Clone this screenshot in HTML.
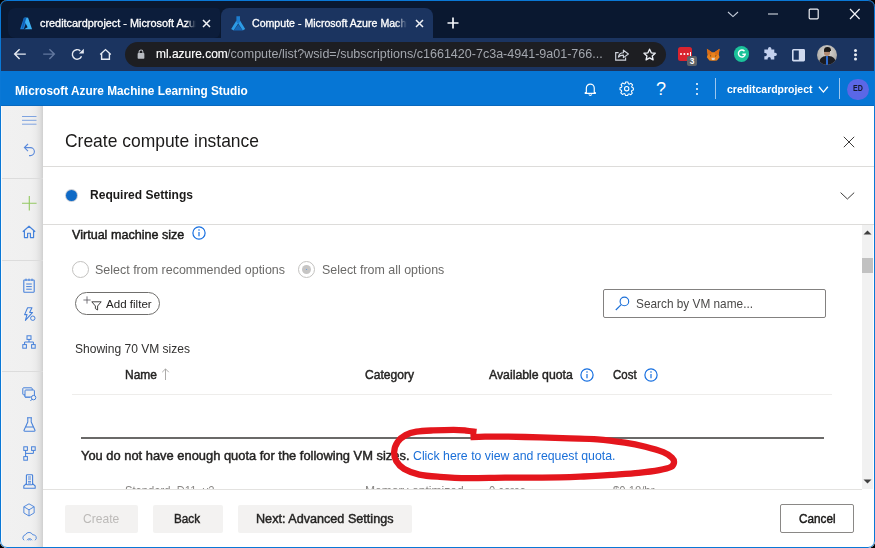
<!DOCTYPE html>
<html lang="en">
<head>
<meta charset="utf-8">
<title>Compute - Microsoft Azure Machine Learning Studio</title>
<style>
*{box-sizing:border-box;margin:0;padding:0}
html,body{width:875px;height:548px;overflow:hidden;background:#000}
body{font-family:"Liberation Sans",sans-serif;color:#201f1e;position:relative}
.t{position:absolute;white-space:nowrap;line-height:1;transform-origin:0 50%}
svg{position:absolute;overflow:visible}
#win{position:absolute;left:0;top:0;width:875px;height:548px;background:#fff;border-radius:7px;overflow:hidden}
#frame{position:absolute;left:0;top:0;width:875px;height:548px;border:1px solid #0a78d6;border-radius:7px;pointer-events:none}
/* chrome */
#tabbar{position:absolute;left:0;top:0;width:875px;height:38px;background:#0a1830}
#tab1{position:absolute;left:8px;top:8px;width:212px;height:30px;background:#0c1d3b;border-radius:7px 4px 6px 7px}
#tab2{position:absolute;left:221px;top:8px;width:212px;height:30px;background:#1b3460;border-radius:8px 8px 0 0}
#toolbar{position:absolute;left:0;top:38px;width:875px;height:33px;background:#1b3460}
#pill{position:absolute;left:125px;top:42px;width:541px;height:25px;border-radius:13px;background:#1d1e22}
/* azure header */
#azhead{position:absolute;left:0;top:71px;width:875px;height:35px;background:#0676d5}
#azhead .t{color:#fff}
/* sidebar */
#side{position:absolute;left:0;top:106px;width:43px;height:442px;background:linear-gradient(90deg,#fafafa 0,#fafafa 2px,#f1f1f1 2.5px,#f0f0f0 31px,#ebebeb 36px,#e0e0e0 40px,#d0d0d0 43px)}
.sep{position:absolute;left:2px;width:41px;height:1px;background:#dcdcdc}
/* panel */
#panel{position:absolute;left:43px;top:106px;width:832px;height:442px;background:#fff}
.hl{position:absolute;height:1px;background:#dddcda}
.btn{position:absolute;top:505px;height:28px;background:#f3f2f1;border-radius:2px}
.gray{color:#6b6a68}
#c1s,#c2s{display:inline-block;transform-origin:0 50%}
.sb{font-weight:normal !important;-webkit-text-stroke:0.45px currentColor}
#c1s{transform:scaleX(1.0452)}
#c2s{transform:scaleX(1.0198)}
#url1{transform:scaleX(0.9765)}
#url2{transform:scaleX(1.0226)}
#aztitle{transform:scaleX(0.8889)}
#azws{transform:scaleX(0.9264)}
#ptitle{transform:scaleX(0.9489)}
#preq{transform:scaleX(0.9488)}
#pvm{transform:scaleX(0.9911)}
#pr1{transform:scaleX(0.9833)}
#pr2{transform:scaleX(0.9797)}
#paf{transform:scaleX(1.0068)}
#psearch{transform:scaleX(0.9320)}
#pshow{transform:scaleX(0.9481)}
#hname{transform:scaleX(0.9455)}
#hcat{transform:scaleX(0.9517)}
#hquota{transform:scaleX(0.9683)}
#hcost{transform:scaleX(0.9044)}
#pquota{transform:scaleX(1.0161)}
#plink{transform:scaleX(0.9700)}
#bcreate{transform:scaleX(0.9503)}
#bback{transform:scaleX(0.9214)}
#bnext{transform:scaleX(0.9946)}
#bcancel{transform:scaleX(0.9266)}
#r1a{transform:scaleX(0.8841)}
#r1b{transform:scaleX(0.9522)}
#r1c{transform:scaleX(0.8796)}
#r1d{transform:scaleX(0.8891)}
#azed{transform:scaleX(0.8703)}
#c1{top:15.80px !important}
#c2{top:15.80px !important}
#url1{top:46.06px !important}
#url2{top:46.06px !important}
#aztitle{top:81.69px !important}
#azws{top:80.68px !important}
#azed{top:84.36px !important}
#ptitle{top:128.52px !important}
#preq{top:187.20px !important}
#pvm{top:226.50px !important}
#pr1{top:261.80px !important}
#pr2{top:261.80px !important}
#paf{top:296.92px !important}
#psearch{top:296.00px !important}
#pshow{top:340.50px !important}
#hname{top:367.00px !important}
#hcat{top:367.00px !important}
#hquota{top:367.00px !important}
#hcost{top:367.00px !important}
#pquota{top:447.70px !important}
#plink{top:447.70px !important}
#bcreate{top:511.10px !important}
#bback{top:511.10px !important}
#bnext{top:511.10px !important}
#bcancel{top:511.10px !important}
</style>
</head>
<body>
<div id="win">
<!-- ===== Browser chrome ===== -->
<div id="tabbar"></div>
<div id="tab1"></div>
<div id="tab2"></div>
<div id="toolbar"></div>
<div id="pill"></div>

<!-- tab 1 favicon (Azure A) -->
<svg style="left:18.6px;top:16.8px" width="14" height="13.6" viewBox="0 0 15 15">
  <path d="M5.2 0.8 L9.6 0.8 L5 13.6 L1 13.6 Z" fill="#1a7fd8"/>
  <path d="M6.2 0.8 L9.8 0.8 L14.2 13.6 L5.4 13.6 L9.3 11.2 L6.6 6.2 Z" fill="#3db1f2"/>
  <path d="M5.2 0.8 L8 0.8 L4.2 12 L3 12.6 Z" fill="#0f5fb4"/>
</svg>
<div class="t" id="c1" style="left:40px;top:16px;font-size:10.4px;-webkit-text-stroke:0.3px #fff;color:#fff;width:160px;overflow:hidden;-webkit-mask-image:linear-gradient(90deg,#000 146px,transparent 156px);mask-image:linear-gradient(90deg,#000 146px,transparent 156px);line-height:15px"><span id="c1s" >creditcardproject - Microsoft Azure Machine</span></div>
<svg style="left:202px;top:19px" width="9" height="9" viewBox="0 0 9 9"><path d="M1 1L8 8M8 1L1 8" stroke="#f0f2f6" stroke-width="1.5" fill="none"/></svg>

<!-- tab 2 favicon (Azure ML) -->
<svg style="left:231.2px;top:16px" width="14.4" height="15" viewBox="0 0 14.4 15">
  <path d="M7.2 8.6L11.6 14.6H2.8Z" fill="#1766b5"/>
  <path d="M5.4 4.6L7.2 7.6L2.6 14.6L0.2 13Z" fill="#2c9be6"/>
  <path d="M9 4.6L7.2 7.6L11.8 14.6L14.2 13Z" fill="#2c9be6"/>
  <path d="M5.4 0.2H9V5.4L7.2 8L5.4 5.4Z" fill="#1e7ed0"/>
</svg>
<div class="t" id="c2" style="left:252px;top:16px;font-size:10.4px;-webkit-text-stroke:0.3px #fff;color:#fff;width:158px;overflow:hidden;-webkit-mask-image:linear-gradient(90deg,#000 144px,transparent 155px);mask-image:linear-gradient(90deg,#000 144px,transparent 155px);line-height:15px"><span id="c2s" >Compute - Microsoft Azure Machine Learning</span></div>
<svg style="left:415px;top:19px" width="9" height="9" viewBox="0 0 9 9"><path d="M1 1L8 8M8 1L1 8" stroke="#f0f2f6" stroke-width="1.5" fill="none"/></svg>
<!-- new tab plus -->
<svg style="left:447px;top:17px" width="12" height="12" viewBox="0 0 12 12"><path d="M6 0.5V11.5M0.5 6H11.5" stroke="#f4f6fa" stroke-width="1.7" fill="none"/></svg>

<!-- window controls -->
<svg style="left:727px;top:11px" width="12" height="7" viewBox="0 0 12 7"><path d="M1 1L6 5.6L11 1" stroke="#c7cedb" stroke-width="1.1" fill="none"/></svg>
<svg style="left:767px;top:13px" width="12" height="2" viewBox="0 0 12 2"><path d="M1 1H11" stroke="#e6e9ef" stroke-width="1.2"/></svg>
<svg style="left:808px;top:8px" width="12" height="12" viewBox="0 0 12 12"><rect x="1.2" y="1.2" width="9" height="9.6" rx="1" stroke="#eef0f5" stroke-width="1.2" fill="none"/></svg>
<svg style="left:849px;top:8px" width="12" height="12" viewBox="0 0 12 12"><path d="M1 1L10.6 11M10.6 1L1 11" stroke="#f2f4f8" stroke-width="1.2" fill="none"/></svg>

<!-- toolbar nav icons -->
<svg style="left:0;top:0" width="125" height="71" viewBox="0 0 125 71">
<path d="M25.8 54.1H15.2M19.6 49.2L14.7 54.1L19.6 59" stroke="#e6eaf2" stroke-width="1.45" fill="none"/>
<path d="M43.2 54.1H53.8M49.4 49.2L54.3 54.1L49.4 59" stroke="#62779e" stroke-width="1.45" fill="none"/>
<path d="M80.28 50.87A4.75 4.75 0 1 0 81.50 56.18" stroke="#e6eaf2" stroke-width="1.45" fill="none"/>
<path d="M83.8 48.7V53.6H78.9Z" fill="#e6eaf2"/>
<path d="M100.2 54.6L105.5 49.6L110.8 54.6M101.6 53.6V59.3H109.4V53.6" stroke="#e6eaf2" stroke-width="1.4" fill="none"/>
</svg>
<!-- lock -->
<svg style="left:137px;top:48.6px" width="8" height="10.6" viewBox="0 0 10 13"><rect x="0.8" y="5" width="8.4" height="7.2" rx="1" fill="#b9bcc2"/><path d="M2.6 5.4V3.6A2.4 2.4 0 0 1 7.4 3.6V5.4" stroke="#b9bcc2" stroke-width="1.3" fill="none"/></svg>
<div class="t" id="url1" style="left:155.5px;top:46px;font-size:12.25px;-webkit-text-stroke:0.15px #fff;line-height:17px;color:#fff">ml.azure.com</div>
<div class="t" id="url2" style="left:227.3px;top:46px;font-size:12.25px;line-height:17px;color:#a3a7ae">/compute/list?wsid=/subscriptions/c1661420-7c3a-4941-9a01-766...</div>
<!-- share -->
<svg style="left:614.5px;top:48.4px" width="14.5" height="12.8" viewBox="0 0 14.5 12.8"><path d="M3.6 4.6H0.7V12.1H10.6V9.4" stroke="#cfd4dc" stroke-width="1.15" fill="none"/><path d="M3.4 9.2C3.8 6.4 5.6 4.9 8.4 4.8V2.2L13.4 6L8.4 9.6V7.2C6.2 7.2 4.6 7.8 3.4 9.2Z" stroke="#cfd4dc" stroke-width="1.15" fill="none" stroke-linejoin="round"/></svg>
<!-- star -->
<svg style="left:643.2px;top:47.8px" width="13.2" height="13.2" viewBox="0 0 15 15"><path d="M7.5 1.4L9.4 5.5L13.9 6L10.5 9L11.5 13.5L7.5 11.2L3.5 13.5L4.5 9L1.1 6L5.6 5.5Z" stroke="#eef1f6" stroke-width="1.55" fill="none" stroke-linejoin="round"/></svg>

<!-- extensions -->
<!-- lastpass-like red -->
<div style="position:absolute;left:678px;top:47px;width:14px;height:14.4px;border-radius:2.5px;background:#d9242f"></div>
<div style="position:absolute;left:680px;top:53.4px;width:2px;height:2px;border-radius:1px;background:#fff;box-shadow:3.4px 0 0 #fff,6.8px 0 0 #fff"></div>
<div style="position:absolute;left:690.2px;top:51.6px;width:1px;height:5.6px;background:#fff"></div>
<div style="position:absolute;left:687.2px;top:56px;width:9.8px;height:9.8px;border-radius:2px;background:#5f6469"></div>
<div class="t" style="left:689.8px;top:57.2px;font-size:8.4px;font-weight:bold;color:#fff;line-height:8px">3</div>
<!-- metamask fox -->
<svg style="left:706.2px;top:47.8px" width="14.4" height="13.6" viewBox="0 0 17 16">
  <path d="M1 0.8L7 5H10L16 0.8L15 7.6L16 11L13 14.6L10 15H7L4 14.6L1 11L2 7.6Z" fill="#e8821e"/>
  <path d="M1 0.8L7 5L6 8L2 7.6ZM16 0.8L10 5L11 8L15 7.6Z" fill="#d96c16"/>
  <path d="M6.4 11.6H10.6L10 14H7Z" fill="#dcd3c8"/>
  <path d="M4.4 8.6L6.2 9L5.8 10.2ZM12.6 8.6L10.8 9L11.2 10.2Z" fill="#2a2320"/>
</svg>
<!-- grammarly -->
<div style="position:absolute;left:734.2px;top:46.4px;width:15.2px;height:15.2px;border-radius:8px;background:#1bc29a"></div>
<svg style="left:737px;top:49.2px" width="9.6" height="9.6" viewBox="0 0 10 10"><path d="M7.8 2.4A3.6 3.6 0 1 0 8.6 5.4H5.6" stroke="#fff" stroke-width="1.5" fill="none"/></svg>
<!-- puzzle -->
<svg style="left:762px;top:46.4px" width="16" height="15.6" viewBox="0 0 16 16"><path d="M6 2.6A1.7 1.7 0 0 1 9.4 2.6V3.6H12.4V6.8H13.4A1.7 1.7 0 0 1 13.4 10.2H12.4V13.8H8.8V12.8A1.6 1.6 0 0 0 5.6 12.8V13.8H2.2V10.4H3.2A1.6 1.6 0 0 0 3.2 7.2H2.2V3.6H6Z" fill="#c3d0ee"/></svg>
<!-- side panel -->
<svg style="left:792.2px;top:48.6px" width="13" height="12.4" viewBox="0 0 13 12.4"><rect x="0.8" y="0.8" width="11.4" height="10.8" rx="0.6" stroke="#d0daf0" stroke-width="1.6" fill="none"/><rect x="6.8" y="0.8" width="5.4" height="10.8" fill="#d0daf0"/></svg>
<!-- avatar -->
<div style="position:absolute;left:817.2px;top:45px;width:20px;height:20px;border-radius:10px;background:radial-gradient(circle at 50% 40%,#dcd9d5 0,#bcb9b5 50%,#8f8d8b 100%);overflow:hidden">
  <div style="position:absolute;left:6.8px;top:3.4px;width:6.4px;height:8px;border-radius:3.2px;background:#b08a72"></div>
  <div style="position:absolute;left:6.6px;top:2.4px;width:6.8px;height:3.6px;border-radius:3.4px 3.4px 0 0;background:#1d1a18"></div>
  <div style="position:absolute;left:7px;top:6.2px;width:6px;height:1.2px;background:#2a2522"></div>
  <div style="position:absolute;left:1.5px;top:11.4px;width:17px;height:12px;border-radius:7px 7px 0 0;background:#1b1c22"></div>
  <div style="position:absolute;left:9.2px;top:11.4px;width:1.8px;height:9px;background:#2c6ad0"></div>
</div>
<!-- dots -->
<div style="position:absolute;left:854.3px;top:49.1px;width:2.6px;height:2.6px;border-radius:2px;background:#e8ecf3;box-shadow:0 4.3px 0 #e8ecf3,0 8.6px 0 #e8ecf3"></div>
<!-- ===== Azure header ===== -->
<div id="azhead"></div>
<div id="hdrshadow" style="position:absolute;left:0;top:105px;width:875px;height:1px;background:#0868be"></div>
<div class="t" id="aztitle" style="left:15px;top:81px;font-size:13.3px;font-weight:bold;color:#fff;line-height:17px">Microsoft Azure Machine Learning Studio</div>
<!-- bell -->
<svg style="left:583.7px;top:81.6px" width="12.6" height="15" viewBox="0 0 14 16"><path d="M2.6 11.4V6.4A4.4 4.4 0 0 1 11.4 6.4V11.4H12.6V12.4H1.4V11.4Z" stroke="#fff" stroke-width="1.3" fill="none" stroke-linejoin="round"/><path d="M5.4 13.4A1.7 1.7 0 0 0 8.6 13.4" stroke="#fff" stroke-width="1.2" fill="none"/></svg>
<!-- gear -->
<svg style="left:618.9px;top:81.4px" width="15.4" height="15.4" viewBox="-8.5 -8.5 17 17"><g stroke="#fff" fill="none"><circle r="2.4" stroke-width="1.2"/><path stroke-width="1.15" stroke-linejoin="round" d="M-1.3 -7.4H1.3L1.8 -5.5L3 -5L4.7 -6L6.5 -4.2L5.5 -2.5L6 -1.3L7.4 -0.9V1.5L5.7 2L5.2 3.2L6.2 4.9L4.4 6.7L2.7 5.7L1.5 6.2L1.1 7.6H-1.3L-1.8 5.9L-3 5.4L-4.7 6.4L-6.5 4.6L-5.5 2.9L-6 1.7L-7.4 1.3V-1.1L-5.7 -1.6L-5.2 -2.8L-6.2 -4.5L-4.4 -6.3L-2.7 -5.3L-1.6 -5.7Z"/></g></svg>
<!-- question -->
<div class="t" id="azq" style="left:656px;top:80px;font-size:18px;color:#fff;line-height:18px">?</div>
<!-- dots -->
<div style="position:absolute;left:696px;top:83px;width:2px;height:2px;border-radius:1px;background:#fff;box-shadow:0 5px 0 #fff,0 10px 0 #fff"></div>
<div style="position:absolute;left:715px;top:78px;width:1px;height:21px;background:#9cc6ee"></div>
<div class="t" id="azws" style="left:727px;top:81px;font-size:11.3px;font-weight:bold;color:#fff;line-height:16px">creditcardproject</div>
<svg style="left:818px;top:86.4px" width="11" height="7.4" viewBox="0 0 11 8"><path d="M0.6 0.8L5.4 6.6L10.2 0.8" stroke="#fff" stroke-width="1.4" fill="none"/></svg>
<div style="position:absolute;left:839px;top:78px;width:1px;height:21px;background:#9cc6ee"></div>
<div style="position:absolute;left:847px;top:78.5px;width:21.5px;height:21.5px;border-radius:11px;background:#5b67e6"></div>
<div class="t" id="azed" style="left:853px;top:84px;font-size:8.2px;font-weight:bold;color:#15182e;line-height:10px">ED</div>
<!-- ===== Sidebar ===== -->
<div id="side"></div>
<div class="sep" style="top:178px"></div>
<div class="sep" style="top:260px"></div>
<div class="sep" style="top:371px"></div>
<!-- hamburger -->
<svg style="left:22px;top:115px" width="14.5" height="11" viewBox="0 0 14.5 11"><path d="M0 1.5H14.5M0 5.3H14.5M0 9.2H14.5" stroke="#7ea3e0" stroke-width="1"/></svg>
<!-- undo -->
<svg style="left:23px;top:143px" width="13" height="14" viewBox="0 0 13 14"><path d="M5 1L1.4 4.6L5 8.2M1.6 4.6H7.4A4 4 0 0 1 7.4 12.6H6" stroke="#5b8adb" stroke-width="1.1" fill="none"/></svg>
<!-- plus -->
<svg style="left:21.9px;top:196.2px" width="14.6" height="14.6" viewBox="0 0 15 15"><path d="M7.5 0V15M0 7.5H15" stroke="#93c862" stroke-width="1.15"/></svg>
<!-- home -->
<svg style="left:22.2px;top:225.2px" width="14" height="14" viewBox="0 0 14 14"><path d="M0.8 6.8L7 1.2L13.2 6.8M2.4 5.8V12.6H5.6V8.2H8.4V12.6H11.6V5.8" stroke="#4482dc" stroke-width="1.15" fill="none" stroke-linejoin="round"/></svg>
<!-- notebook -->
<svg style="left:23px;top:278px" width="12" height="15" viewBox="0 0 12 15"><rect x="0.8" y="2" width="10.4" height="12.2" rx="0.6" stroke="#4580da" stroke-width="1.1" fill="none"/><path d="M3 0.6V3M6 0.6V3M9 0.6V3M3.2 6H8.8M3.2 8.6H8.8M3.2 11.2H8.8" stroke="#4580da" stroke-width="1"/></svg>
<!-- lightning (automated ml) -->
<svg style="left:23px;top:307px" width="13" height="15" viewBox="0 0 13 15"><path d="M4.6 0.8H9L6.6 5.4H9.6L2.4 13.4L4 7.6H1.6Z" stroke="#4580da" stroke-width="1.05" fill="none" stroke-linejoin="round"/><circle cx="9.8" cy="11.2" r="2.2" stroke="#4580da" stroke-width="1" fill="#efefef"/></svg>
<!-- org chart (designer) -->
<svg style="left:22px;top:335px" width="14" height="14" viewBox="0 0 14 14"><rect x="5" y="0.8" width="4" height="3.6" stroke="#4580da" stroke-width="1" fill="none"/><rect x="0.8" y="9.6" width="3.6" height="3.6" stroke="#4580da" stroke-width="1" fill="none"/><rect x="9.6" y="9.6" width="3.6" height="3.6" stroke="#4580da" stroke-width="1" fill="none"/><path d="M7 4.4V7M2.6 9.6V7H11.4V9.6" stroke="#4580da" stroke-width="1" fill="none"/></svg>
<!-- datasets -->
<svg style="left:22px;top:387px" width="15" height="15" viewBox="0 0 15 15"><rect x="0.8" y="0.8" width="9.4" height="7" rx="0.8" stroke="#4580da" stroke-width="1" fill="none"/><path d="M3 7.8V10.2H8" stroke="#4580da" stroke-width="1" fill="none"/><rect x="3" y="3" width="9.4" height="7" rx="0.8" stroke="#4580da" stroke-width="1" fill="#efefef"/><circle cx="11.6" cy="10.6" r="2.2" stroke="#4580da" stroke-width="1" fill="#efefef"/><path d="M10 12.2L8.4 14" stroke="#4580da" stroke-width="1"/></svg>
<!-- flask -->
<svg style="left:23px;top:417px" width="13" height="15" viewBox="0 0 13 15"><path d="M4 0.8H9M4.8 0.8V5L1 13.2Q0.8 14.2 1.8 14.2H11.2Q12.2 14.2 12 13.2L8.2 5V0.8M2.8 10H10.2" stroke="#4580da" stroke-width="1.05" fill="none" stroke-linejoin="round"/></svg>
<!-- pipeline -->
<svg style="left:23px;top:446px" width="13" height="15" viewBox="0 0 13 15"><rect x="0.8" y="0.8" width="3.6" height="3.6" stroke="#4580da" stroke-width="1" fill="none"/><rect x="8.6" y="0.8" width="3.6" height="3.6" stroke="#4580da" stroke-width="1" fill="none"/><rect x="0.8" y="10.6" width="3.6" height="3.6" stroke="#4580da" stroke-width="1" fill="none"/><path d="M2.6 4.4V10.6M10.4 4.4V7.4H2.6" stroke="#4580da" stroke-width="1" fill="none"/></svg>
<!-- server (models) -->
<svg style="left:23px;top:474px" width="13" height="15" viewBox="0 0 13 15"><rect x="3.4" y="0.8" width="6.2" height="10" rx="0.8" stroke="#4580da" stroke-width="1.1" fill="none"/><path d="M5 3H8M5 5H8M5 7.4H8M5 9H8" stroke="#4580da" stroke-width="0.9"/><path d="M3.4 9.6L0.8 12V14.2H12.2V12L9.6 9.6" stroke="#4580da" stroke-width="1.05" fill="none" stroke-linejoin="round"/></svg>
<!-- cube (endpoints) -->
<svg style="left:22.7px;top:503.4px" width="12" height="14" viewBox="0 0 14 16"><path d="M7 0.8L13 4.2V11.4L7 15L1 11.4V4.2ZM1 4.2L7 7.8L13 4.2M7 7.8V15" stroke="#4580da" stroke-width="1.05" fill="none" stroke-linejoin="round"/></svg>
<!-- cloud -->
<svg style="left:21.6px;top:532px" width="15" height="8.6" viewBox="0 0 17 10"><path d="M2.2 9.6A3.6 3.6 0 0 1 3.8 3.2A4.6 4.6 0 0 1 12.2 3.2A3.6 3.6 0 0 1 15 9.6" stroke="#4580da" stroke-width="1.05" fill="none"/><path d="M5.6 9.6A3.2 3.2 0 0 1 11.4 9.6M7.4 9.6A1.4 1.4 0 0 1 9.6 9.6" stroke="#4580da" stroke-width="1" fill="none"/></svg>
<!-- ===== Panel ===== -->
<div id="panel"></div>
<div class="t" id="ptitle" style="left:65px;top:129px;font-size:18.4px;line-height:24px;color:#1b1a19">Create compute instance</div>
<svg style="left:843px;top:136px" width="12" height="12" viewBox="0 0 12 12"><path d="M0.8 0.8L11.2 11.2M11.2 0.8L0.8 11.2" stroke="#3b3a39" stroke-width="1" fill="none"/></svg>
<div class="hl" style="left:43px;top:166px;width:831px"></div>
<!-- step dot -->
<div style="position:absolute;left:65px;top:189px;width:13px;height:13px;border-radius:7px;background:#c6ccd6"></div>
<div style="position:absolute;left:66px;top:190px;width:11px;height:11px;border-radius:6px;background:#0f6ac6"></div>
<div class="t" id="preq" style="left:90px;top:187px;font-size:12.7px;font-weight:bold;line-height:16px;color:#1b1a19">Required Settings</div>
<svg style="left:840px;top:192px" width="15" height="8" viewBox="0 0 15 8"><path d="M0.6 0.6L7.4 7L14.2 0.6" stroke="#3b3a39" stroke-width="1" fill="none"/></svg>
<div class="hl" style="left:43px;top:224px;width:831px"></div>

<!-- scroll content -->
<div class="t sb" id="pvm" style="left:72px;top:226px;font-size:12.7px;font-weight:bold;line-height:16px;color:#1b1a19">Virtual machine size</div>
<svg class="info" style="left:192px;top:226px" width="14" height="14" viewBox="0 0 14 14"><circle cx="7" cy="7" r="6.1" stroke="#166fe0" stroke-width="1.2" fill="none"/><path d="M7 6V10.2" stroke="#166fe0" stroke-width="1.2"/><circle cx="7" cy="4" r="0.8" fill="#166fe0"/></svg>

<div style="position:absolute;left:72px;top:261px;width:17px;height:17px;border-radius:9px;border:1px solid #c3c2c0;background:#fff"></div>
<div class="t gray" id="pr1" style="left:95px;top:262px;font-size:12.7px;line-height:16px">Select from recommended options</div>
<div style="position:absolute;left:298px;top:261px;width:17px;height:17px;border-radius:9px;border:1px solid #c3c2c0;background:#fff"></div>
<div style="position:absolute;left:302px;top:265px;width:9px;height:9px;border-radius:5px;background:#c6c5c4"></div>
<div style="position:absolute;left:306px;top:269px;width:1px;height:1px;background:#6d9fe0"></div>
<div class="t gray" id="pr2" style="left:322px;top:262px;font-size:12.7px;line-height:16px">Select from all options</div>

<!-- add filter pill -->
<div style="position:absolute;left:75px;top:292px;width:85px;height:23px;border-radius:12px;border:1px solid #706f6d;background:#fff"></div>
<svg style="left:83px;top:296px" width="8" height="8" viewBox="0 0 8 8"><path d="M4 0.4V7.6M0.4 4H7.6" stroke="#55545a" stroke-width="0.8"/></svg>
<svg style="left:91px;top:301px" width="11" height="10" viewBox="0 0 11 10"><path d="M0.8 0.8H10.2L6.6 5V9L4.4 7.6V5Z" stroke="#3b3a39" stroke-width="0.95" fill="none" stroke-linejoin="round"/></svg>
<div class="t" id="paf" style="left:105.5px;top:297px;font-size:11.5px;line-height:15px;color:#252423">Add filter</div>

<!-- search box -->
<div style="position:absolute;left:603px;top:289px;width:223px;height:29px;border-radius:2px;border:1px solid #838180;background:#fff"></div>
<svg style="left:615px;top:296px" width="15" height="15" viewBox="0 0 15 15"><circle cx="9.4" cy="5.4" r="4.3" stroke="#1a6fd8" stroke-width="1.15" fill="none"/><path d="M6.2 8.6L0.8 14" stroke="#1a6fd8" stroke-width="1.15"/></svg>
<div class="t" id="psearch" style="left:636px;top:296px;font-size:12.7px;line-height:16px;color:#4a4948">Search by VM name...</div>

<div class="t" id="pshow" style="left:75px;top:341px;font-size:12.7px;line-height:16px;color:#323130">Showing 70 VM sizes</div>

<!-- table header -->
<div class="t sb" id="hname" style="left:125px;top:367px;font-size:12.7px;font-weight:bold;line-height:16px;color:#252423">Name</div>
<svg style="left:161px;top:368px" width="9" height="13" viewBox="0 0 9 13"><path d="M4.5 1V12M1.2 4.2L4.5 0.9L7.8 4.2" stroke="#a3a19f" stroke-width="0.9" fill="none"/></svg>
<div class="t sb" id="hcat" style="left:365px;top:367px;font-size:12.7px;font-weight:bold;line-height:16px;color:#252423">Category</div>
<div class="t sb" id="hquota" style="left:489px;top:367px;font-size:12.7px;font-weight:bold;line-height:16px;color:#252423">Available quota</div>
<svg class="info" style="left:580px;top:368px" width="14" height="14" viewBox="0 0 14 14"><circle cx="7" cy="7" r="6.1" stroke="#166fe0" stroke-width="1.2" fill="none"/><path d="M7 6V10.2" stroke="#166fe0" stroke-width="1.2"/><circle cx="7" cy="4" r="0.8" fill="#166fe0"/></svg>
<div class="t sb" id="hcost" style="left:613px;top:367px;font-size:12.7px;font-weight:bold;line-height:16px;color:#252423">Cost</div>
<svg class="info" style="left:644px;top:368px" width="14" height="14" viewBox="0 0 14 14"><circle cx="7" cy="7" r="6.1" stroke="#166fe0" stroke-width="1.2" fill="none"/><path d="M7 6V10.2" stroke="#166fe0" stroke-width="1.2"/><circle cx="7" cy="4" r="0.8" fill="#166fe0"/></svg>
<div class="hl" style="left:72px;top:394px;width:760px;background:#eeedeb"></div>

<!-- quota group header -->
<div style="position:absolute;left:81px;top:437px;width:743px;height:2px;background:#6a6968"></div>
<div class="t sb" id="pquota" style="left:81px;top:448px;font-size:12.7px;font-weight:bold;line-height:16px;color:#252423">You do not have enough quota for the following VM sizes.</div>
<div class="t" id="plink" style="left:413px;top:448px;font-size:12.7px;line-height:16px;color:#1a6fd8">Click here to view and request quota.</div>

<!-- first row (clipped by footer) -->
<div style="position:absolute;left:43px;top:480px;width:819px;height:9px;overflow:hidden">
  <div class="t gray" id="r1a" style="left:82px;top:3px;font-size:12.7px;line-height:16px;color:#8a8886">Standard_D11_v2</div>
  <div class="t gray" id="r1b" style="left:322px;top:3px;font-size:12.7px;line-height:16px;color:#8a8886">Memory optimized</div>
  <div class="t gray" id="r1c" style="left:446px;top:3px;font-size:12.7px;line-height:16px;color:#8a8886">0 cores</div>
  <div class="t gray" id="r1d" style="left:570px;top:3px;font-size:12.7px;line-height:16px;color:#8a8886">$0.18/hr</div>
</div>

<!-- red hand-drawn ellipse -->
<svg style="left:0;top:0" width="875" height="548" viewBox="0 0 875 548"><path d="M476.5 431.9C474.8 431.7 469.8 431.0 466.0 430.6C462.2 430.2 459.1 429.8 453.6 429.8C448.1 429.8 439.2 430.1 433.0 430.4C426.8 430.7 421.1 430.9 416.5 431.7C411.9 432.5 408.8 433.4 405.6 435.1C402.5 436.8 399.5 439.1 397.6 441.9C395.7 444.6 394.4 448.4 394.2 451.6C394.0 454.8 394.6 458.3 396.3 461.2C398.0 464.1 400.4 466.8 404.2 469.0C408.0 471.2 413.4 473.3 419.3 474.6C425.2 475.9 431.9 476.3 439.9 476.9C447.9 477.5 456.4 478.1 467.3 478.2C478.2 478.3 492.9 477.8 505.0 477.7C517.1 477.6 529.2 477.7 540.0 477.6C550.8 477.5 562.7 477.4 570.0 477.2C577.3 477.0 578.7 476.8 583.7 476.5C588.7 476.2 595.4 475.9 600.0 475.6C604.6 475.3 604.8 475.4 611.2 474.9C617.6 474.4 630.6 473.6 638.6 472.8C646.6 472.0 653.8 471.1 659.2 470.1C664.6 469.1 668.3 468.3 670.8 467.0C673.3 465.7 673.8 464.1 674.0 462.5C674.2 460.9 673.8 459.4 672.0 457.7C670.2 456.0 667.7 454.0 663.3 452.2C658.9 450.4 651.8 448.3 645.4 446.7C639.0 445.1 632.9 443.8 624.9 442.6C616.9 441.4 606.5 440.0 597.4 439.3C588.2 438.6 579.6 438.7 570.0 438.4C560.4 438.1 550.8 437.7 540.0 437.4C529.2 437.1 514.2 436.7 505.0 436.6C495.8 436.5 490.8 436.6 485.0 436.7C479.2 436.8 472.9 437.1 470.5 437.2" stroke="#e4161d" stroke-width="6.3" fill="none" stroke-linecap="butt" stroke-linejoin="round"/></svg>

<!-- scrollbar -->
<div style="position:absolute;left:862px;top:225px;width:11px;height:264px;background:#f1f1f1"></div>
<div style="position:absolute;left:862.3px;top:258px;width:10.7px;height:14.7px;background:#c1c1c1"></div>
<svg style="left:863px;top:230px" width="9" height="5" viewBox="0 0 9 5"><path d="M0.5 4.6L4.5 0.6L8.5 4.6Z" fill="#404040"/></svg>
<svg style="left:863px;top:479px" width="9" height="5" viewBox="0 0 9 5"><path d="M0.5 0.4L4.5 4.4L8.5 0.4Z" fill="#404040"/></svg>

<!-- footer -->
<div class="hl" style="left:43px;top:489px;width:819px;background:#e3e2e0"></div>
<div class="btn" style="left:65px;width:73px"></div>
<div class="t" id="bcreate" style="left:83px;top:511px;font-size:12.7px;line-height:16px;color:#bcbab8">Create</div>
<div class="btn" style="left:153px;width:70px"></div>
<div class="t sb" id="bback" style="left:174px;top:511px;font-size:12.7px;font-weight:bold;line-height:16px;color:#252423">Back</div>
<div class="btn" style="left:238px;width:174px"></div>
<div class="t sb" id="bnext" style="left:256px;top:511px;font-size:12.7px;font-weight:bold;line-height:16px;color:#252423">Next: Advanced Settings</div>
<div style="position:absolute;left:780px;top:504px;width:74px;height:29px;border-radius:2px;border:1px solid #8a8886;background:#fff"></div>
<div class="t sb" id="bcancel" style="left:799px;top:511px;font-size:12.7px;font-weight:bold;line-height:16px;color:#1b1a19">Cancel</div>
<div id="frame"></div>
</div>
</body>
</html>
